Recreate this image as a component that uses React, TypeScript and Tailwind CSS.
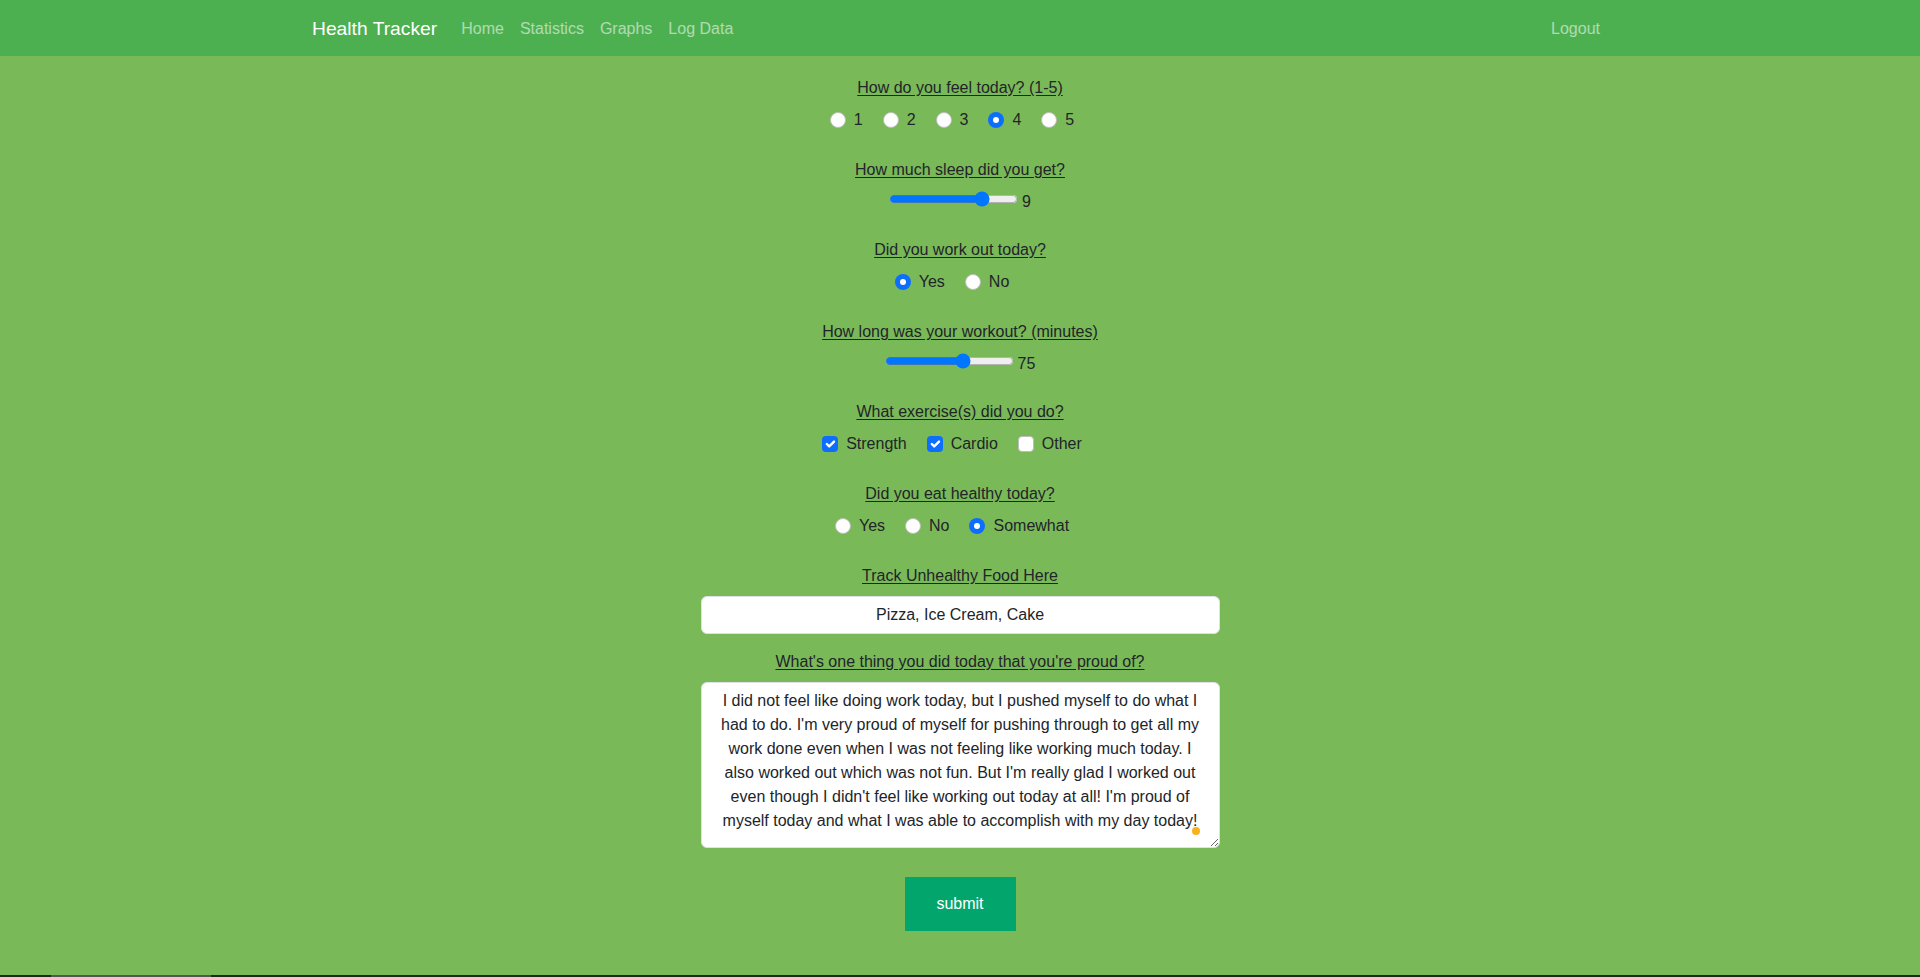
import { useState } from "react";

const font = { fontFamily: '"Segoe UI", "Liberation Sans", Arial, sans-serif' };

const PROUD_TEXT =
  "I did not feel like doing work today, but I pushed myself to do what I had to do. I'm very proud of myself for pushing through to get all my work done even when I was not feeling like working much today. I also worked out which was not fun. But I'm really glad I worked out even though I didn't feel like working out today at all! I'm proud of myself today and what I was able to accomplish with my day today!";

function Radio({
  label,
  checked,
  onChange,
}: {
  label: string;
  checked: boolean;
  onChange: () => void;
}) {
  return (
    <label className="inline-flex items-center gap-2 mr-4 cursor-pointer">
      <input type="radio" className="sr-only" checked={checked} onChange={onChange} />
      {checked ? (
        <span className="w-4 h-4 rounded-full bg-[#0d6efd] flex items-center justify-center">
          <span className="w-[6px] h-[6px] rounded-full bg-white" />
        </span>
      ) : (
        <span className="w-4 h-4 rounded-full bg-white border border-[#bdbdbd]" />
      )}
      <span>{label}</span>
    </label>
  );
}

function Check({
  label,
  checked,
  onChange,
}: {
  label: string;
  checked: boolean;
  onChange: () => void;
}) {
  return (
    <label className="inline-flex items-center gap-2 mr-4 cursor-pointer">
      <input type="checkbox" className="sr-only" checked={checked} onChange={onChange} />
      {checked ? (
        <span className="w-4 h-4 rounded-[4px] bg-[#0d6efd] flex items-center justify-center">
          <svg viewBox="0 0 20 20" className="w-4 h-4" fill="none">
            <path d="M6 10l3 3l6-6" stroke="#fff" strokeWidth="3" strokeLinecap="round" strokeLinejoin="round" />
          </svg>
        </span>
      ) : (
        <span className="w-4 h-4 rounded-[4px] bg-white border border-[#bdbdbd]" />
      )}
      <span>{label}</span>
    </label>
  );
}

function Question({ children }: { children: React.ReactNode }) {
  return <div className="underline underline-offset-2 mb-2 leading-6">{children}</div>;
}

export default function App() {
  const [feel, setFeel] = useState("4");
  const [sleep, setSleep] = useState(9);
  const [workedOut, setWorkedOut] = useState("Yes");
  const [minutes, setMinutes] = useState(75);
  const [exercises, setExercises] = useState<Record<string, boolean>>({
    Strength: true,
    Cardio: true,
    Other: false,
  });
  const [healthy, setHealthy] = useState("Somewhat");
  const [food, setFood] = useState("Pizza, Ice Cream, Cake");
  const [proud, setProud] = useState(PROUD_TEXT);

  return (
    <div className="h-[977px] flex flex-col bg-[#7ab958] text-[#212529] text-base overflow-hidden" style={font}>
      <nav className="bg-[#4caf50] h-14 shrink-0">
        <div className="max-w-[1320px] mx-auto px-3 h-full flex items-center pt-[2px]">
          <a href="#" className="text-white text-[19.25px] mr-4 py-[5px]">
            Health Tracker
          </a>
          <div className="flex">
            {["Home", "Statistics", "Graphs", "Log Data"].map((l) => (
              <a key={l} href="#" className="px-2 py-2 text-white/55">
                {l}
              </a>
            ))}
          </div>
          <a href="#" className="ml-auto px-2 py-2 text-white/55">
            Logout
          </a>
        </div>
      </nav>

      <main className="flex-1 flex flex-col items-center text-center pt-5">
        <section className="mb-[26px]">
          <Question>How do you feel today? (1-5)</Question>
          <div className="flex justify-center gap-1 leading-6">
            {["1", "2", "3", "4", "5"].map((v) => (
              <Radio key={v} label={v} checked={feel === v} onChange={() => setFeel(v)} />
            ))}
          </div>
        </section>

        <section className="mb-[26px]">
          <Question>How much sleep did you get?</Question>
          <div className="flex justify-center items-center gap-1 h-[22px]">
            <input
              type="range"
              min={0}
              max={12}
              value={sleep}
              onChange={(e) => setSleep(Number(e.target.value))}
              className="mb-1"
            />
            <span className="mt-[2px]">{sleep}</span>
          </div>
        </section>

        <section className="mb-[26px]">
          <Question>Did you work out today?</Question>
          <div className="flex justify-center gap-1 leading-6">
            {["Yes", "No"].map((v) => (
              <Radio key={v} label={v} checked={workedOut === v} onChange={() => setWorkedOut(v)} />
            ))}
          </div>
        </section>

        <section className="mb-[26px]">
          <Question>How long was your workout? (minutes)</Question>
          <div className="flex justify-center items-center gap-1 h-[22px]">
            <input
              type="range"
              min={0}
              max={120}
              value={minutes}
              onChange={(e) => setMinutes(Number(e.target.value))}
              className="mb-1"
            />
            <span className="mt-[2px]">{minutes}</span>
          </div>
        </section>

        <section className="mb-[26px]">
          <Question>What exercise(s) did you do?</Question>
          <div className="flex justify-center gap-1 leading-6">
            {Object.keys(exercises).map((k) => (
              <Check
                key={k}
                label={k}
                checked={exercises[k]}
                onChange={() => setExercises({ ...exercises, [k]: !exercises[k] })}
              />
            ))}
          </div>
        </section>

        <section className="mb-[26px]">
          <Question>Did you eat healthy today?</Question>
          <div className="flex justify-center gap-1 leading-6">
            {["Yes", "No", "Somewhat"].map((v) => (
              <Radio key={v} label={v} checked={healthy === v} onChange={() => setHealthy(v)} />
            ))}
          </div>
        </section>

        <section className="mb-4 w-[519px]">
          <Question>Track Unhealthy Food Here</Question>
          <input
            type="text"
            value={food}
            onChange={(e) => setFood(e.target.value)}
            className="w-full h-[38px] px-3 rounded-md bg-white border border-[#dee2e6] text-center text-[#212529] outline-none"
          />
        </section>

        <section className="w-[519px]">
          <Question>What's one thing you did today that you're proud of?</Question>
          <div className="relative">
            <textarea
              value={proud}
              onChange={(e) => setProud(e.target.value)}
              className="block w-full h-[166px] px-3 py-[6px] rounded-md bg-white border border-[#dee2e6] text-center leading-6 text-[#212529] outline-none"
            />
            <span className="absolute right-[20px] bottom-[13px] w-2 h-2 rounded-full bg-[#f9b21d]" />
          </div>
        </section>

        <button type="button" className="mt-[29px] w-[111px] h-[54px] bg-[#02a66d] text-white">
          submit
        </button>
      </main>

      <div className="h-[2px] shrink-0 bg-[#1c2a1a] flex">
        <div className="ml-[51px] w-[160px] bg-[#555]" />
      </div>
    </div>
  );
}
